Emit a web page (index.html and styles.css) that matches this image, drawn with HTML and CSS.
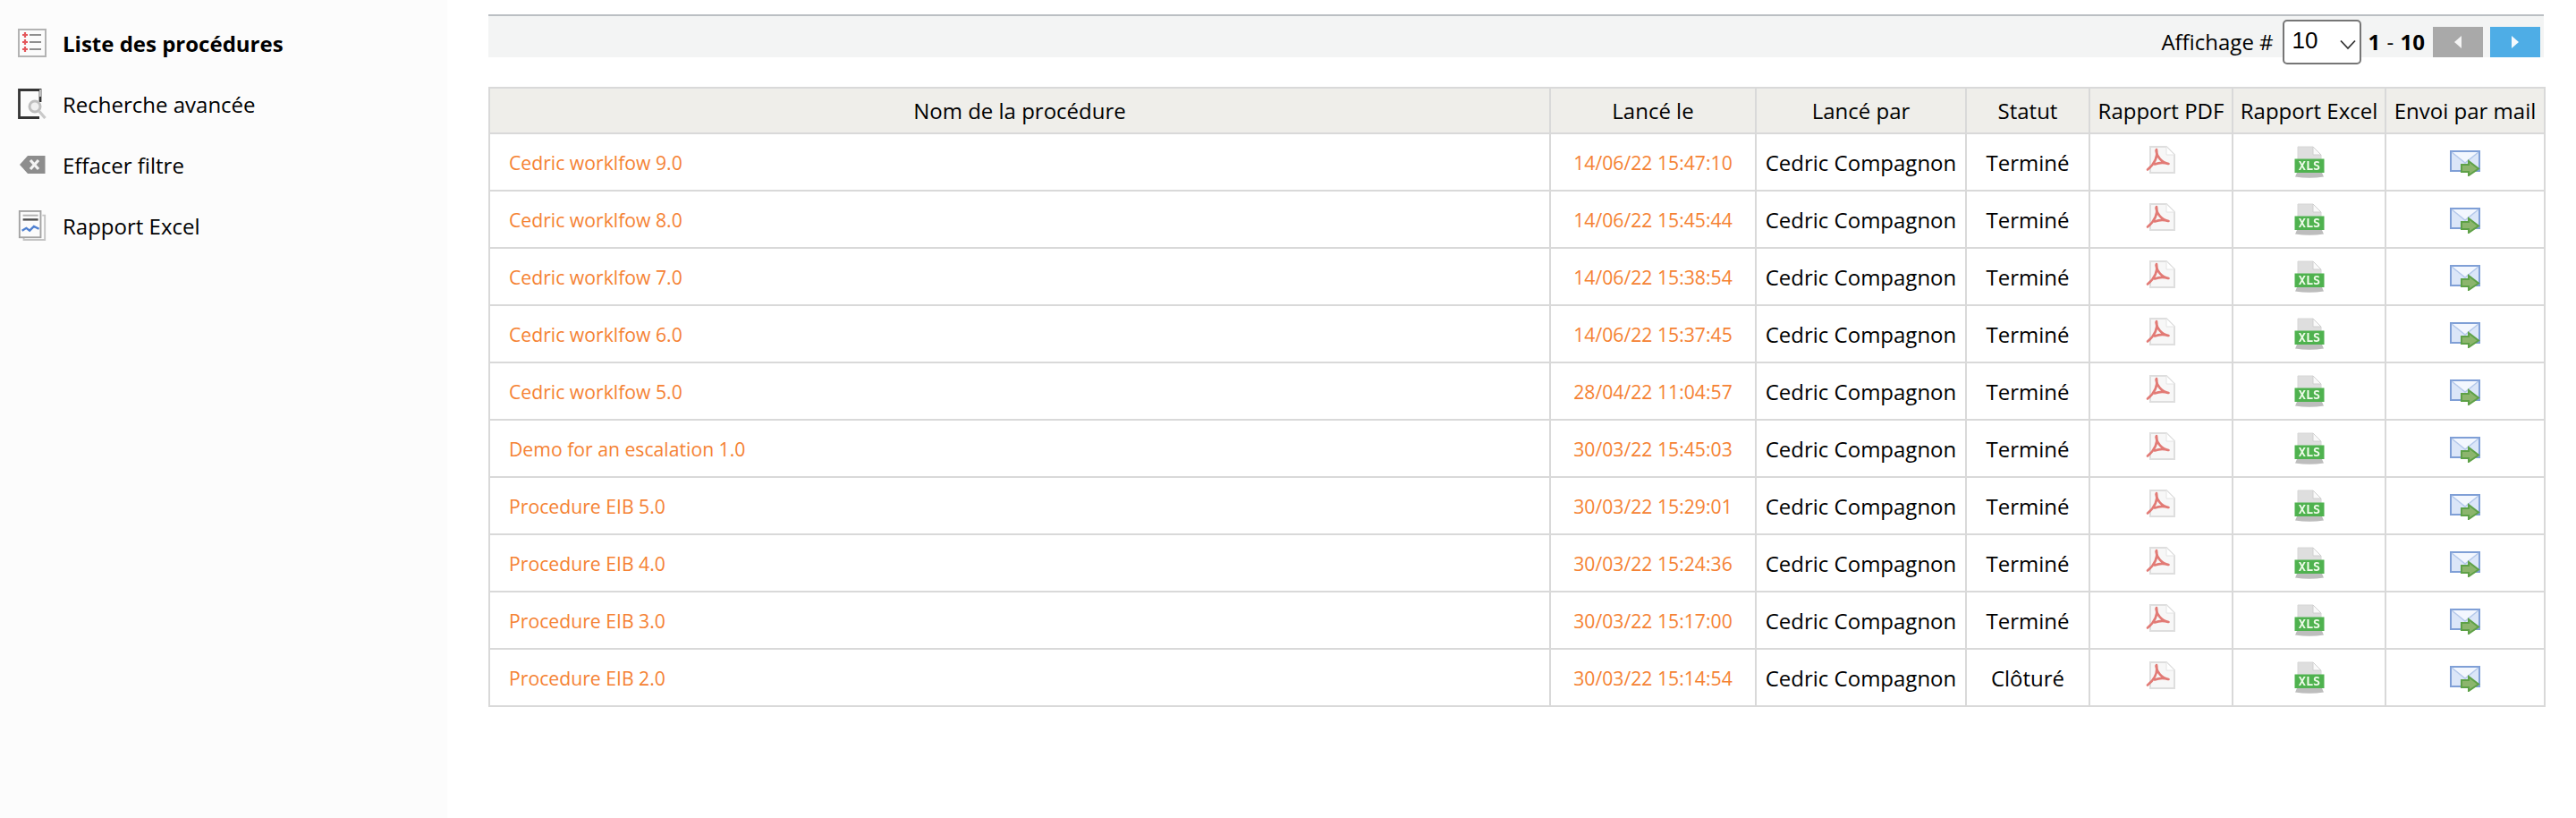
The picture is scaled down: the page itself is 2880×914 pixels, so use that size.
FILE: index.html
```html
<!DOCTYPE html>
<html lang="fr">
<head>
<meta charset="utf-8">
<title>Liste des procédures</title>
<link rel="stylesheet" href="styles.css">
</head>
<body>
<svg class="defs" width="0" height="0" aria-hidden="true">
  <defs>
    <symbol id="i-pdf" viewBox="0 0 33 31">
      <path d="M5 1h18l9 9v20H5z" fill="#f7f7f7" stroke="#dedede" stroke-width="2"/>
      <path d="M23 1v9h9z" fill="#fff" stroke="#e4e4e4" stroke-width="1"/>
      <path d="M12 4c1.500 8-2 16-10 22.500M11.500 5c1 7 6 13.500 14 15M10 20.500c4-1.500 9-2.500 15-.5" fill="none" stroke="#e27a75" stroke-width="2.600" stroke-linecap="round"/>
    </symbol>
    <symbol id="i-xls" viewBox="0 0 34 37">
      <path d="M4 1h17l9 9v20H4z" fill="#dedede" stroke="#d6d6d6"/>
      <path d="M21 1v9h9z" fill="#fafafa" stroke="#cfcfcf"/>
      <rect x="0.500" y="14.500" width="33" height="15.500" fill="#4fb24f"/>
      <text class="xls-label" x="17" y="27" text-anchor="middle">XLS</text>
      <path d="M3 30h28l2 4.500q-16 2.500-32 0z" fill="#bdbdbd"/>
    </symbol>
    <symbol id="i-mail" viewBox="0 0 34 29">
      <rect x="1" y="1" width="32" height="22" fill="#dbe6f8" stroke="#7f9fd6" stroke-width="2"/>
      <path d="M2 2l15 12L32 2" fill="#f3f7fe" stroke="#b4c8ea" stroke-width="1.500"/>
      <path d="M13 16h8v-4l11 8.500L21 28v-4h-8z" fill="#8cb56d" stroke="#5ea147" stroke-width="2"/>
    </symbol>
  </defs>
</svg>

<div class="app">
  <aside class="sidebar">
    <nav class="menu">
      <a class="menu-item active">
        <svg class="menu-icon" viewBox="0 0 32 32">
          <rect x="1" y="1" width="30" height="30" fill="#fbfbfb" stroke="#b3b3b3" stroke-width="2"/>
          <path d="M13 7h13M13 15h13M13 23h13" stroke="#8f8f8f" stroke-width="2"/>
          <path d="M5 7h6M8 4v6M5 15h6M8 12v6M5 23h6M8 20v6" stroke="#e4585c" stroke-width="2.200"/>
        </svg>
        <span>Liste des procédures</span>
      </a>
      <a class="menu-item">
        <svg class="menu-icon" viewBox="0 0 32 34">
          <path d="M25 15V1.500H1.500v31H24" fill="#fcfcfc" stroke="#353535" stroke-width="2.800"/>
          <path d="M25 1v8" stroke="#bdbdbd" stroke-width="2"/>
          <circle cx="19" cy="20" r="6" fill="#f0f0f0" stroke="#bfbfbf" stroke-width="3"/>
          <path d="M23.500 25l7 8" stroke="#c9c9c9" stroke-width="3.200"/>
        </svg>
        <span>Recherche avancée</span>
      </a>
      <a class="menu-item">
        <svg class="menu-icon" viewBox="0 0 32 32">
          <path d="M2 16L11 6h19.500v20H11z" fill="#8d8d8d"/>
          <path d="M14 11l9 10M23 11l-9 10" stroke="#f4f4f4" stroke-width="3.200"/>
        </svg>
        <span>Effacer filtre</span>
      </a>
      <a class="menu-item">
        <svg class="menu-icon" viewBox="0 0 32 36">
          <path d="M28 6h3v29H6v-3" fill="none" stroke="#c4c4c4" stroke-width="2"/>
          <rect x="1" y="1" width="25" height="31" fill="#fbfbfb" stroke="#a3a3a3" stroke-width="2"/>
          <path d="M5 6h18" stroke="#b0b0b0" stroke-width="2"/>
          <path d="M5 11h18" stroke="#4a4a4a" stroke-width="2.500"/>
          <path d="M4 24l5-3 4 3 5-5 6 3" fill="none" stroke="#4d7fd0" stroke-width="2.500"/>
        </svg>
        <span>Rapport Excel</span>
      </a>
    </nav>
  </aside>

  <main class="content">
    <div class="toolbar">
      <span class="pager-label">Affichage #</span>
      <span class="select-wrap">
        <select class="page-size" aria-label="Affichage">
          <option>10</option>
          <option>20</option>
          <option>50</option>
        </select>
        <svg class="chevron" viewBox="0 0 18 12"><path d="M1 1.500l8 8.500 8-8.500" fill="none" stroke="#333" stroke-width="1.800"/></svg>
      </span>
      <span class="pager-range"><b>1</b> - <b>10</b></span>
      <button class="pager-btn prev" aria-label="Précédent"><svg viewBox="0 0 10 16"><path d="M9 1v14L1 8z" fill="#f4f4f4"/></svg></button>
      <button class="pager-btn next" aria-label="Suivant"><svg viewBox="0 0 10 16"><path d="M1 1v14l8-7z" fill="#f4f9fd"/></svg></button>
    </div>

    <table class="grid">
      <colgroup>
        <col class="c-name"><col class="c-date"><col class="c-user"><col class="c-status"><col class="c-pdf"><col class="c-xls"><col class="c-mail">
      </colgroup>
      <thead>
        <tr>
          <th>Nom de la procédure</th><th>Lancé le</th><th>Lancé par</th><th>Statut</th><th>Rapport PDF</th><th>Rapport Excel</th><th>Envoi par mail</th>
        </tr>
      </thead>
      <tbody>
        <tr><td class="name">Cedric worklfow 9.0</td><td class="date">14/06/22 15:47:10</td><td>Cedric Compagnon</td><td>Terminé</td><td><svg class="ic pdf"><use href="#i-pdf"/></svg></td><td><svg class="ic xls"><use href="#i-xls"/></svg></td><td><svg class="ic mail"><use href="#i-mail"/></svg></td></tr>
        <tr><td class="name">Cedric worklfow 8.0</td><td class="date">14/06/22 15:45:44</td><td>Cedric Compagnon</td><td>Terminé</td><td><svg class="ic pdf"><use href="#i-pdf"/></svg></td><td><svg class="ic xls"><use href="#i-xls"/></svg></td><td><svg class="ic mail"><use href="#i-mail"/></svg></td></tr>
        <tr><td class="name">Cedric worklfow 7.0</td><td class="date">14/06/22 15:38:54</td><td>Cedric Compagnon</td><td>Terminé</td><td><svg class="ic pdf"><use href="#i-pdf"/></svg></td><td><svg class="ic xls"><use href="#i-xls"/></svg></td><td><svg class="ic mail"><use href="#i-mail"/></svg></td></tr>
        <tr><td class="name">Cedric worklfow 6.0</td><td class="date">14/06/22 15:37:45</td><td>Cedric Compagnon</td><td>Terminé</td><td><svg class="ic pdf"><use href="#i-pdf"/></svg></td><td><svg class="ic xls"><use href="#i-xls"/></svg></td><td><svg class="ic mail"><use href="#i-mail"/></svg></td></tr>
        <tr><td class="name">Cedric worklfow 5.0</td><td class="date">28/04/22 11:04:57</td><td>Cedric Compagnon</td><td>Terminé</td><td><svg class="ic pdf"><use href="#i-pdf"/></svg></td><td><svg class="ic xls"><use href="#i-xls"/></svg></td><td><svg class="ic mail"><use href="#i-mail"/></svg></td></tr>
        <tr><td class="name">Demo for an escalation 1.0</td><td class="date">30/03/22 15:45:03</td><td>Cedric Compagnon</td><td>Terminé</td><td><svg class="ic pdf"><use href="#i-pdf"/></svg></td><td><svg class="ic xls"><use href="#i-xls"/></svg></td><td><svg class="ic mail"><use href="#i-mail"/></svg></td></tr>
        <tr><td class="name">Procedure EIB 5.0</td><td class="date">30/03/22 15:29:01</td><td>Cedric Compagnon</td><td>Terminé</td><td><svg class="ic pdf"><use href="#i-pdf"/></svg></td><td><svg class="ic xls"><use href="#i-xls"/></svg></td><td><svg class="ic mail"><use href="#i-mail"/></svg></td></tr>
        <tr><td class="name">Procedure EIB 4.0</td><td class="date">30/03/22 15:24:36</td><td>Cedric Compagnon</td><td>Terminé</td><td><svg class="ic pdf"><use href="#i-pdf"/></svg></td><td><svg class="ic xls"><use href="#i-xls"/></svg></td><td><svg class="ic mail"><use href="#i-mail"/></svg></td></tr>
        <tr><td class="name">Procedure EIB 3.0</td><td class="date">30/03/22 15:17:00</td><td>Cedric Compagnon</td><td>Terminé</td><td><svg class="ic pdf"><use href="#i-pdf"/></svg></td><td><svg class="ic xls"><use href="#i-xls"/></svg></td><td><svg class="ic mail"><use href="#i-mail"/></svg></td></tr>
        <tr><td class="name">Procedure EIB 2.0</td><td class="date">30/03/22 15:14:54</td><td>Cedric Compagnon</td><td>Clôturé</td><td><svg class="ic pdf"><use href="#i-pdf"/></svg></td><td><svg class="ic xls"><use href="#i-xls"/></svg></td><td><svg class="ic mail"><use href="#i-mail"/></svg></td></tr>
      </tbody>
    </table>
  </main>
</div>
</body>
</html>
```

FILE: styles.css
```css
* { box-sizing: border-box; }
html, body { margin: 0; height: 100%; background: #fff; }
body { font-family: "Open Sans", "Noto Sans", sans-serif; color: #000; overflow: hidden; }
.defs { position: absolute; }

.app { display: flex; height: 914px; }

.sidebar { flex: 0 0 500px; background: #fcfcfc; padding: 32px 0 0 20px; }
.menu { display: flex; flex-direction: column; gap: 36px; }
.menu-item { display: flex; align-items: center; height: 32px; gap: 18px; font-size: 24px; color: #000; }
.menu-item.active { font-weight: 700; }
.menu-icon { width: 32px; height: 34px; flex: none; filter: blur(.4px); }

.content { flex: 1; min-width: 0; padding: 16px 36px 0 46px; }

.toolbar { display: flex; justify-content: flex-end; align-items: flex-end; height: 48px; border-top: 2px solid #bbbfc3; background: #f3f4f4; padding-right: 4px; }
.pager-label { font-size: 24px; line-height: 34px; margin-right: 10px; }
.select-wrap { position: relative; align-self: flex-start; margin: 4px 8px 0 0; width: 88px; height: 50px; }
.page-size { appearance: none; -webkit-appearance: none; width: 100%; height: 100%; border: 2px solid #767676; border-radius: 5px; background: #fff; font-family: "Liberation Sans", Arial, sans-serif; font-size: 26px; padding: 0 0 4px 9px; color: #000; }
.chevron { position: absolute; right: 6px; top: 22px; width: 18px; height: 12px; pointer-events: none; }
.pager-range { font-size: 24px; line-height: 34px; margin-right: 9px; word-spacing: 1px; }
.pager-btn { display: flex; align-items: center; justify-content: center; width: 56px; height: 34px; border: 0; padding: 0; }
.pager-btn svg { width: 10px; height: 16px; }
.pager-btn.prev { background: #a9a9a9; margin-right: 8px; }
.pager-btn.next { background: #4eade6; }

.grid { width: 100%; margin-top: 33px; table-layout: fixed; border-collapse: collapse; font-size: 24px; }
.c-name { width: 1186px; }
.c-date { width: 230px; }
.c-user { width: 235px; }
.c-status { width: 138px; }
.c-pdf { width: 160px; }
.c-xls { width: 171px; }
.c-mail { width: 178px; }
.grid th, .grid td { border: 2px solid #d9d9d9; padding: 0; text-align: center; white-space: nowrap; vertical-align: middle; }
.grid th { height: 51px; background: #efeeea; font-weight: 400; }
.grid td { height: 64px; }
.grid td.name { text-align: left; padding-left: 21px; color: #f58233; font-size: 21.2px; }
.grid td.date { color: #f58233; font-size: 21.2px; }
.xls-label { font-family: "DejaVu Sans Mono", monospace; font-size: 13.5px; font-weight: 700; fill: #eefbe9; }
.ic { display: block; margin: 0 auto; filter: blur(.4px); }
.ic.pdf { width: 33px; height: 31px; transform: translate(-1px, -3px); }
.ic.xls { width: 34px; height: 37px; }
.ic.mail { width: 34px; height: 29px; transform: translate(0, 1px); }
```
